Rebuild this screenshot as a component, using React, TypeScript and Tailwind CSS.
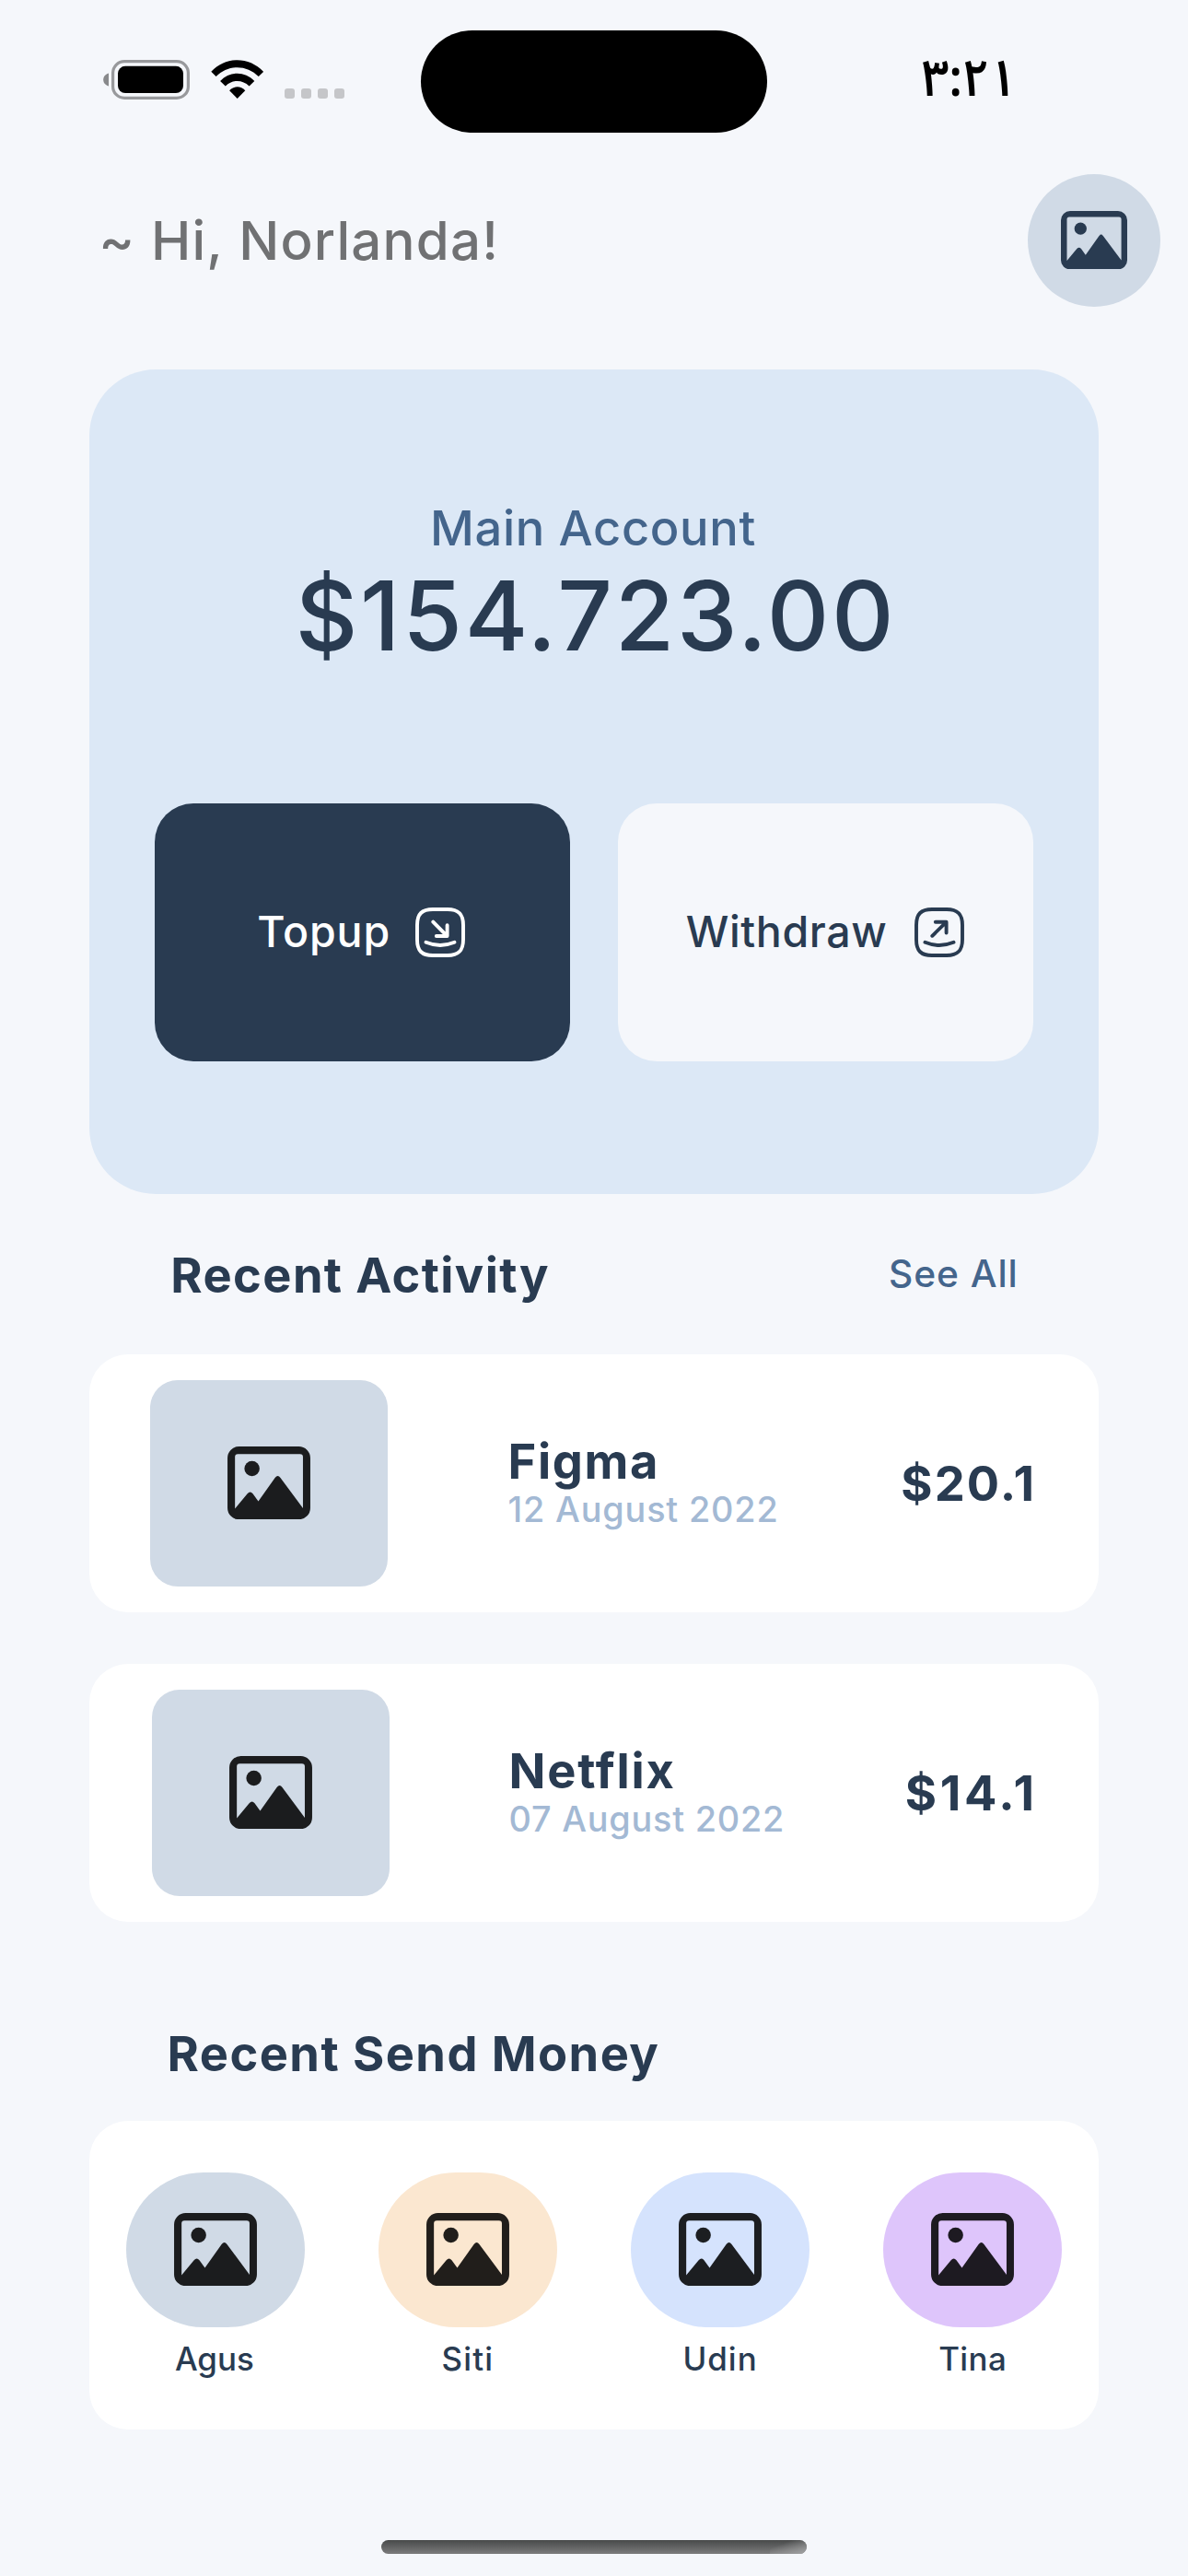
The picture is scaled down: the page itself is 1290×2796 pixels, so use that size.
import React from 'react';

function ImageIcon({ className }: { className: string }) {
  return (
    <svg viewBox="0 0 72 63.4" className={className} fill="currentColor" aria-hidden="true">
      <path
        fillRule="evenodd"
        d="M10 0H62A10 10 0 0 1 72 10V53.4A10 10 0 0 1 62 63.4H10A10 10 0 0 1 0 53.4V10A10 10 0 0 1 10 0ZM9 6.6A2.5 2.5 0 0 0 6.5 9.1V54L17.3 41Q19.7 38.4 22 41L26.8 47.7L41.3 27.2Q43.7 24 46 27.2L65.6 53.6V9.1A2.5 2.5 0 0 0 63.1 6.6Z"
      />
      <circle cx="21.3" cy="19.2" r="6.6" />
    </svg>
  );
}

function TransferIcon({ direction }: { direction: 'in' | 'out' }) {
  return (
    <svg
      viewBox="0 0 72 72"
      className="size-[72px]"
      fill="none"
      stroke="currentColor"
      strokeWidth="3.9"
      strokeLinecap="round"
      strokeLinejoin="round"
      aria-hidden="true"
    >
      <path d="M28 11H44C56 11 61 16 61 28V44C61 56 56 61 44 61H28C16 61 11 56 11 44V28C11 16 16 11 28 11Z" />
      {direction === 'in' ? (
        <path d="M28.3 24.6L43.4 39.8M43.6 28.2V40H31.8" />
      ) : (
        <path d="M28.3 39.8L43.4 24.8M31.8 24.7H43.6V36.5" />
      )}
      <path d="M20.5 46.8C30.5 50.9 41.5 50.9 51.5 46.8" />
    </svg>
  );
}

function StatusBar() {
  return (
    <div className="flex h-[188.7px] items-start justify-between pr-[186.5px] pl-[112px]">
      <div className="flex w-[344.7px] items-start pt-[65px]">
        <svg viewBox="0 0 94 43" className="h-[43px] w-[94px]" aria-hidden="true">
          <path d="M6 14.4C2 15.5 0.2 18.5 0.2 21.4C0.2 24.3 2 27.3 6 28.4Z" fill="#88898b" />
          <rect x="10.6" y="1.6" width="81.8" height="39.8" rx="12.5" fill="none" stroke="#98999c" strokeWidth="3.2" />
          <rect x="16" y="6.8" width="71" height="29.2" rx="8" fill="#000" />
        </svg>
        <svg viewBox="0 0 57.4 42" className="ml-[23px] h-[42px] w-[57.4px]" aria-hidden="true">
          <path d="M0.3 12.8C16 -4 41.4 -4 57.1 12.8L51.8 18.1C39 4.8 18.4 4.8 5.6 18.1Z" fill="#000" />
          <path d="M10.1 22.9C20.8 12 36.6 12 47.3 22.9L41.6 28.5C34.3 21.1 23.1 21.1 15.8 28.5Z" fill="#000" />
          <path d="M20.1 33.2C25 28 32.4 28 37.3 33.2L28.7 41.9Z" fill="#000" />
        </svg>
        <div className="mt-[31px] ml-[22.6px] flex gap-[7px]">
          <span className="size-[11px] rounded-[3px] bg-[#c5c6c9]" />
          <span className="size-[11px] rounded-[3px] bg-[#c5c6c9]" />
          <span className="size-[11px] rounded-[3px] bg-[#c5c6c9]" />
          <span className="size-[11px] rounded-[3px] bg-[#c5c6c9]" />
        </div>
      </div>
      <div className="mt-[33.3px] h-[111px] w-[376.6px] rounded-full bg-black" />
      <time className="ml-auto origin-right scale-x-[0.92] pt-[51px] font-['Noto_Sans_Arabic','DejaVu_Sans',sans-serif] text-[56px] leading-[70px] font-semibold text-black">
        ٣:٢١
      </time>
    </div>
  );
}

const activities = [
  {
    name: 'Figma',
    date: '12 August 2022',
    amount: '$20.1',
    row: 'pl-[66.7px] pr-[68px]',
    text: 'ml-[130px]',
    nameTracking: 'tracking-[1.7px]',
    dateTracking: 'tracking-[0.85px]',
    amountTracking: 'tracking-[2.1px]',
  },
  {
    name: 'Netflix',
    date: '07 August 2022',
    amount: '$14.1',
    row: 'pl-[68.2px] pr-[66.5px]',
    text: 'ml-[129.6px]',
    nameTracking: 'tracking-[1.85px]',
    dateTracking: 'tracking-[0.78px]',
    amountTracking: 'tracking-[3.6px]',
  },
];

const contacts = [
  { name: 'Agus', color: 'bg-[#d0dae6]', label: 'pr-[2px]' },
  { name: 'Siti', color: 'bg-[#fbe7d0]', label: 'tracking-[1.2px]' },
  { name: 'Udin', color: 'bg-[#d5e3fd]', label: 'tracking-[1px]' },
  { name: 'Tina', color: 'bg-[#dec5fb]', label: 'tracking-[0.4px]' },
];

export default function App() {
  return (
    <div className="flex h-[2796px] w-[1290px] flex-col overflow-hidden bg-[#f5f7fb] font-['Inter',sans-serif] text-[#293b51]">
      <StatusBar />

      <header className="flex h-36 items-center justify-between pr-[30px] pl-[107.2px]">
        <h1 className="text-[58.2px] leading-[70px] font-medium tracking-[1.2px] text-[#707173]">~ Hi, Norlanda!</h1>
        <div className="flex size-36 items-center justify-center rounded-full bg-[#d0dae6]">
          <ImageIcon className="h-[63.4px] w-[72px]" />
        </div>
      </header>

      <main className="mx-auto mt-[68.3px] flex w-[1096.5px] flex-col">
        <section className="flex h-[894.7px] flex-col items-center rounded-[72px] bg-[#dce8f6] pt-[140px]">
          <p className="pr-[2px] text-[52.4px] leading-[64px] font-medium tracking-[0.66px] text-[#44658c]">Main Account</p>
          <p className="pl-1 text-[104.7px] leading-[126px] font-medium tracking-[2.73px]">$154.723.00</p>
          <div className="mt-[141.2px] flex w-full justify-between px-[71.2px]">
            <button className="flex h-[280px] w-[451.5px] items-center justify-center gap-[17.6px] rounded-[42px] bg-[#293b51] pl-[5.6px] text-[46.5px] font-medium tracking-[0.89px] text-white">
              Topup
              <TransferIcon direction="in" />
            </button>
            <button className="flex h-[280px] w-[451.5px] items-center justify-center gap-[20px] rounded-[42px] bg-[#f5f7fb] pl-[7.6px] text-[46.5px] font-medium tracking-[0.64px]">
              Withdraw
              <TransferIcon direction="out" />
            </button>
          </div>
        </section>

        <section>
          <div className="flex h-[174.3px] items-center justify-between pr-[87.5px] pl-[88.6px]">
            <h2 className="pt-[3px] text-[52.4px] leading-[64px] font-bold tracking-[1.38px]">Recent Activity</h2>
            <a className="text-[40.7px] leading-[50px] font-medium tracking-[0.91px] text-[#44658c]">See All</a>
          </div>
          <div className="flex flex-col gap-[56.2px]">
            {activities.map((item) => (
              <article key={item.name} className={`flex h-[279.7px] items-center rounded-[42px] bg-white ${item.row}`}>
                <div className="flex h-[224px] w-[258px] items-center justify-center rounded-[30px] bg-[#d0dae6]">
                  <ImageIcon className="h-[79.2px] w-[90px] text-black opacity-[0.865]" />
                </div>
                <div className={item.text}>
                  <h3 className={`text-[52.4px] leading-[58px] font-bold ${item.nameTracking}`}>{item.name}</h3>
                  <p className={`text-[37.8px] leading-[47px] font-medium text-[#a3b9d4] ${item.dateTracking}`}>{item.date}</p>
                </div>
                <p className={`ml-auto text-[52.4px] leading-[64px] font-bold ${item.amountTracking}`}>{item.amount}</p>
              </article>
            ))}
          </div>
        </section>

        <section>
          <div className="flex h-[216.3px] items-center pt-[70.4px] pl-[84.8px]">
            <h2 className="text-[52.4px] leading-[64px] font-bold tracking-[1.45px]">Recent Send Money</h2>
          </div>
          <div className="grid h-[335.6px] grid-cols-4 rounded-[42px] bg-white pt-14">
            {contacts.map((contact) => (
              <div key={contact.name} className="flex flex-col items-center">
                <div className={`flex h-[168px] w-[193.5px] items-center justify-center rounded-[84px] ${contact.color}`}>
                  <ImageIcon className="h-[79.2px] w-[90px] text-black opacity-[0.865]" />
                </div>
                <p className={`mt-[13px] text-[34.9px] leading-[42px] font-medium ${contact.label}`}>{contact.name}</p>
              </div>
            ))}
          </div>
        </section>
      </main>

      <div className="mx-auto mt-[119.3px] h-[15px] w-[462px] overflow-hidden rounded-full bg-linear-to-b from-[#484a4a] to-[#7c7c7d]">
        <div className="ml-auto h-full w-10 bg-linear-to-br from-transparent from-30% to-[#a2a3a4]" />
      </div>
    </div>
  );
}
